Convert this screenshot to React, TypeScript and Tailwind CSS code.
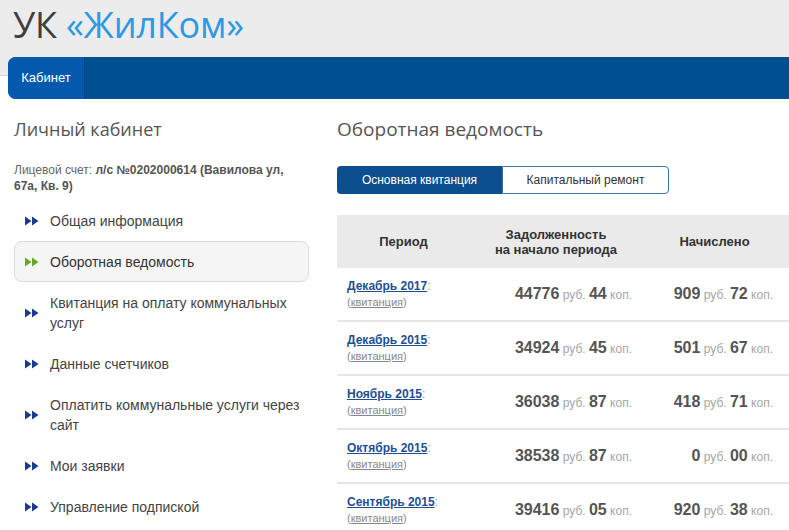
import React from "react";

const Arrows = ({ color }: { color: string }) => (
  <svg width="14" height="10" viewBox="0 0 14 10" className="shrink-0">
    <polygon points="0,0.5 6.5,5 0,9.5" fill={color} />
    <polygon points="7,0.5 13.5,5 7,9.5" fill={color} />
  </svg>
);

const menu: { t: string[]; active?: boolean }[] = [
  { t: ["Общая информация"] },
  { t: ["Оборотная ведомость"], active: true },
  { t: ["Квитанция на оплату коммунальных", "услуг"] },
  { t: ["Данные счетчиков"] },
  { t: ["Оплатить коммунальные услуги через", "сайт"] },
  { t: ["Мои заявки"] },
  { t: ["Управление подпиской"] },
];

const rows = [
  ["Декабрь 2017", "44776", "44", "909", "72"],
  ["Декабрь 2015", "34924", "45", "501", "67"],
  ["Ноябрь 2015", "36038", "87", "418", "71"],
  ["Октябрь 2015", "38538", "87", "0", "00"],
  ["Сентябрь 2015", "39416", "05", "920", "38"],
];

const Money = ({ r, k }: { r: string; k: string }) => (
  <span className="whitespace-nowrap">
    <span className="text-[16px] font-bold text-[#555]">{r}</span>
    <span className="text-[12px] text-[#a5a5a5]"> руб. </span>
    <span className="text-[16px] font-bold text-[#555]">{k}</span>
    <span className="text-[12px] text-[#a5a5a5]"> коп.</span>
  </span>
);

export default function App() {
  return (
    <div className="w-[789px] h-[530px] overflow-hidden bg-white font-['Liberation_Sans',Arial,sans-serif]">
      <div className="h-[76px] bg-[#ececec] border-b border-[#d6d6d6] pl-[13px] pt-[1px]">
        <div className="font-['Open_Sans',sans-serif] text-[36px] leading-[48px] tracking-[-0.2px]">
          <span className="text-[#3f3f3f]">УК </span>
          <span className="text-[#2c9ae1]">«ЖилКом»</span>
        </div>
      </div>
      <div className="relative -mt-[19px] ml-[8px] h-[42px] bg-[#004f90] rounded-l-[8px] flex">
        <div className="w-[77px] h-full bg-[#0459ad] rounded-l-[8px] border-r border-[#02447e] flex items-center justify-center text-white text-[13px]">
          Кабинет
        </div>
      </div>
      <div className="flex pt-[18px]">
        <div className="w-[295px] ml-[14px] shrink-0">
          <div className="font-['Open_Sans',sans-serif] text-[18px] leading-[24px] text-[#555]">
            Личный кабинет
          </div>
          <div className="mt-[21px] text-[12px] leading-[16px] text-[#666]">
            Лицевой счет: <b className="text-[#555]">л/с №0202000614 (Вавилова ул, 67а, Кв. 9)</b>
          </div>
          <div className="mt-[6px] flex flex-col">
            {menu.map((m, i) => (
              <div
                key={i}
                className={
                  "flex items-center gap-[11px] pl-[10px] py-[9.5px] text-[14px] leading-[20px] border rounded-[8px] " +
                  (m.active
                    ? "bg-[#f5f5f5] border-[#dcdcdc] text-[#333]"
                    : "border-transparent text-[#444]")
                }
              >
                <Arrows color={m.active ? "#66a826" : "#1c3a8c"} />
                <div>
                  {m.t.map((l, j) => (
                    <div key={j}>{l}</div>
                  ))}
                </div>
              </div>
            ))}
          </div>
        </div>
        <div className="ml-[28px] flex-1">
          <div className="font-['Open_Sans',sans-serif] text-[19px] leading-[24px] text-[#555]">
            Оборотная ведомость
          </div>
          <div className="mt-[25px] flex h-[28px] text-[12px]">
            <div className="w-[165px] bg-[#0b4f8e] text-white rounded-l-[4px] flex items-center justify-center">
              Основная квитанция
            </div>
            <div className="w-[167px] border border-[#43719d] rounded-r-[4px] text-[#333] flex items-center justify-center">
              Капитальный ремонт
            </div>
          </div>
          <div className="mt-[21px] w-[460px]">
            <div className="grid grid-cols-[133px_172px_1fr] h-[53px] bg-[#ebeaea] text-[13px] font-bold text-[#333] leading-[15px]">
              <div className="flex items-center justify-center">Период</div>
              <div className="flex items-center justify-center text-center">
                Задолженность
                <br />
                на начало периода
              </div>
              <div className="flex items-center justify-center pr-[10px]">Начислено</div>
            </div>
            {rows.map((r, i) => (
              <div
                key={i}
                className="grid grid-cols-[133px_172px_1fr] h-[54px] border-b-2 border-[#e6e6e6]"
              >
                <div className="pl-[10px] flex flex-col justify-center leading-[16px]">
                  <div className="text-[12px]">
                    <span className="font-bold text-[#1f4f91] underline">{r[0]}</span>
                    <span className="text-[#999]">:</span>
                  </div>
                  <div className="text-[11px] text-[#888]">
                    (<span className="underline">квитанция</span>)
                  </div>
                </div>
                <div className="flex items-center justify-end pr-[10px]">
                  <Money r={r[1]} k={r[2]} />
                </div>
                <div className="flex items-center justify-end pr-[24px]">
                  <Money r={r[3]} k={r[4]} />
                </div>
              </div>
            ))}
          </div>
        </div>
      </div>
    </div>
  );
}
